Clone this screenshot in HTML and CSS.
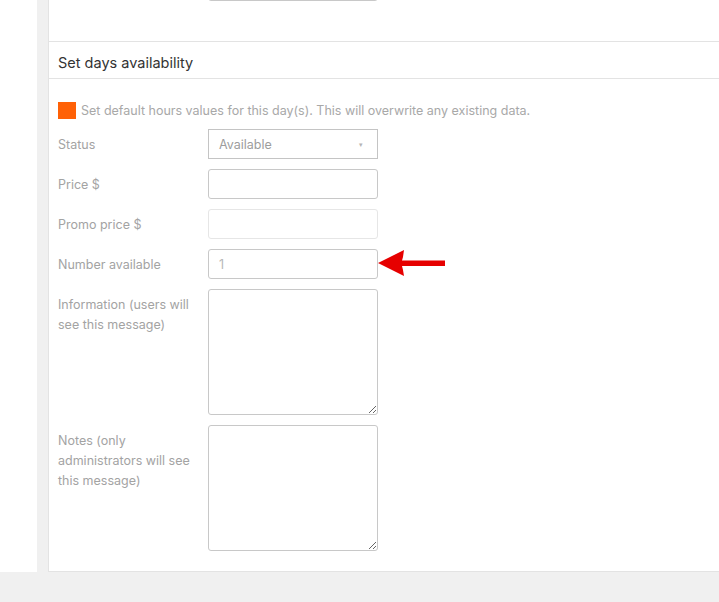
FILE: index.html
```html
<!DOCTYPE html>
<html lang="en">
<head>
    <meta charset="UTF-8">
    <meta name="viewport" content="width=device-width, initial-scale=1.0">
    <title>Set days availability</title>
    <link rel="stylesheet" href="styles.css">
</head>
<body>

<div class="page">
    <div class="sidebar"></div>

    <div class="panel">
        <div class="prev-field">
            <input type="text" class="field">
        </div>

        <div class="section-title">Set days availability</div>

        <div class="section-body">
            <label class="default-row">
                <span class="check-box"></span>
                Set default hours values for this day(s). This will overwrite any existing data.
            </label>

            <div class="form-row">
                <label class="form-label">Status</label>
                <div class="field select">
                    <span>Available</span>
                    <span class="caret">&#9662;</span>
                </div>
            </div>

            <div class="form-row">
                <label class="form-label">Price $</label>
                <input type="text" class="field">
            </div>

            <div class="form-row">
                <label class="form-label">Promo price $</label>
                <input type="text" class="field field-light">
            </div>

            <div class="form-row">
                <label class="form-label">Number available</label>
                <input type="text" class="field" placeholder="1">
                <!-- annotation arrow -->
                <svg class="arrow" width="68" height="28" viewBox="0 0 68 28">
                    <polygon points="0,14 26,1 25,8 24,11.5 67,11.5 67,17 24,17 25,21 26,27" fill="#e60000"/>
                </svg>
            </div>

            <div class="form-row">
                <label class="form-label">Information (users will see this message)</label>
                <textarea class="field textarea"></textarea>
            </div>

            <div class="form-row">
                <label class="form-label">Notes (only administrators will see this message)</label>
                <textarea class="field textarea"></textarea>
            </div>
        </div>
    </div>
</div>

</body>
</html>
```

FILE: styles.css
```css
body {
    margin: 0;
    background-color: #f0f0f0;
    font-family: Inter, "Open Sans", sans-serif;
    font-size: 12.5px;
    color: #a3a3a3;
}
.page {
    display: flex;
    height: 572px;
    overflow: hidden;
}
.sidebar {
    width: 37px;
    background-color: #fff;
    margin-right: 11px;
}
.panel {
    flex: 1;
    background-color: #fff;
    border-left: 1px solid #e3e3e3;
    border-bottom: 1px solid #e3e3e3;
}
.prev-field {
    height: 41px;
    overflow: hidden;
    padding-left: 159px;
}
.prev-field .field {
    display: block;
    margin-top: -29px;
}
.section-title {
    height: 33px;
    line-height: 36px;
    padding: 3px 0 0 9px;
    border-top: 1px solid #e3e3e3;
    border-bottom: 1px solid #e3e3e3;
    font-size: 14.5px;
    color: #333;
}
.section-body {
    padding: 21px 0 0 9px;
}
.default-row {
    display: flex;
    align-items: center;
    height: 20px;
    margin-bottom: 9px;
    white-space: nowrap;
    color: #a8a8a8;
}
.check-box {
    width: 18px;
    height: 17px;
    background-color: #ff6106;
    margin-right: 5px;
}
.form-row {
    display: flex;
    align-items: flex-start;
    margin-bottom: 10px;
}
.form-label {
    width: 150px;
    padding-top: 6px;
    line-height: 20px;
    padding-right: 10px;
    box-sizing: border-box;
}
.field {
    box-sizing: border-box;
    width: 170px;
    height: 30px;
    margin: 0;
    padding: 0 10px;
    border: 1px solid #c8c8c8;
    border-radius: 3px;
    background-color: #fff;
    font-family: inherit;
    font-size: 12.5px;
    color: #555;
}
.field::placeholder {
    color: #b8b8b8;
}
.field-light {
    border-color: #e6e6e6;
}
.select {
    display: flex;
    align-items: center;
    justify-content: space-between;
    border-radius: 0;
    border-color: #c4c4c4;
    color: #9d9d9d;
}
.caret {
    font-size: 7px;
    color: #b5b5b5;
    margin-right: 4px;
}
.textarea {
    height: 126px;
    padding: 6px 10px;
    resize: vertical;
}
.arrow {
    display: block;
    flex-shrink: 0;
}
```
